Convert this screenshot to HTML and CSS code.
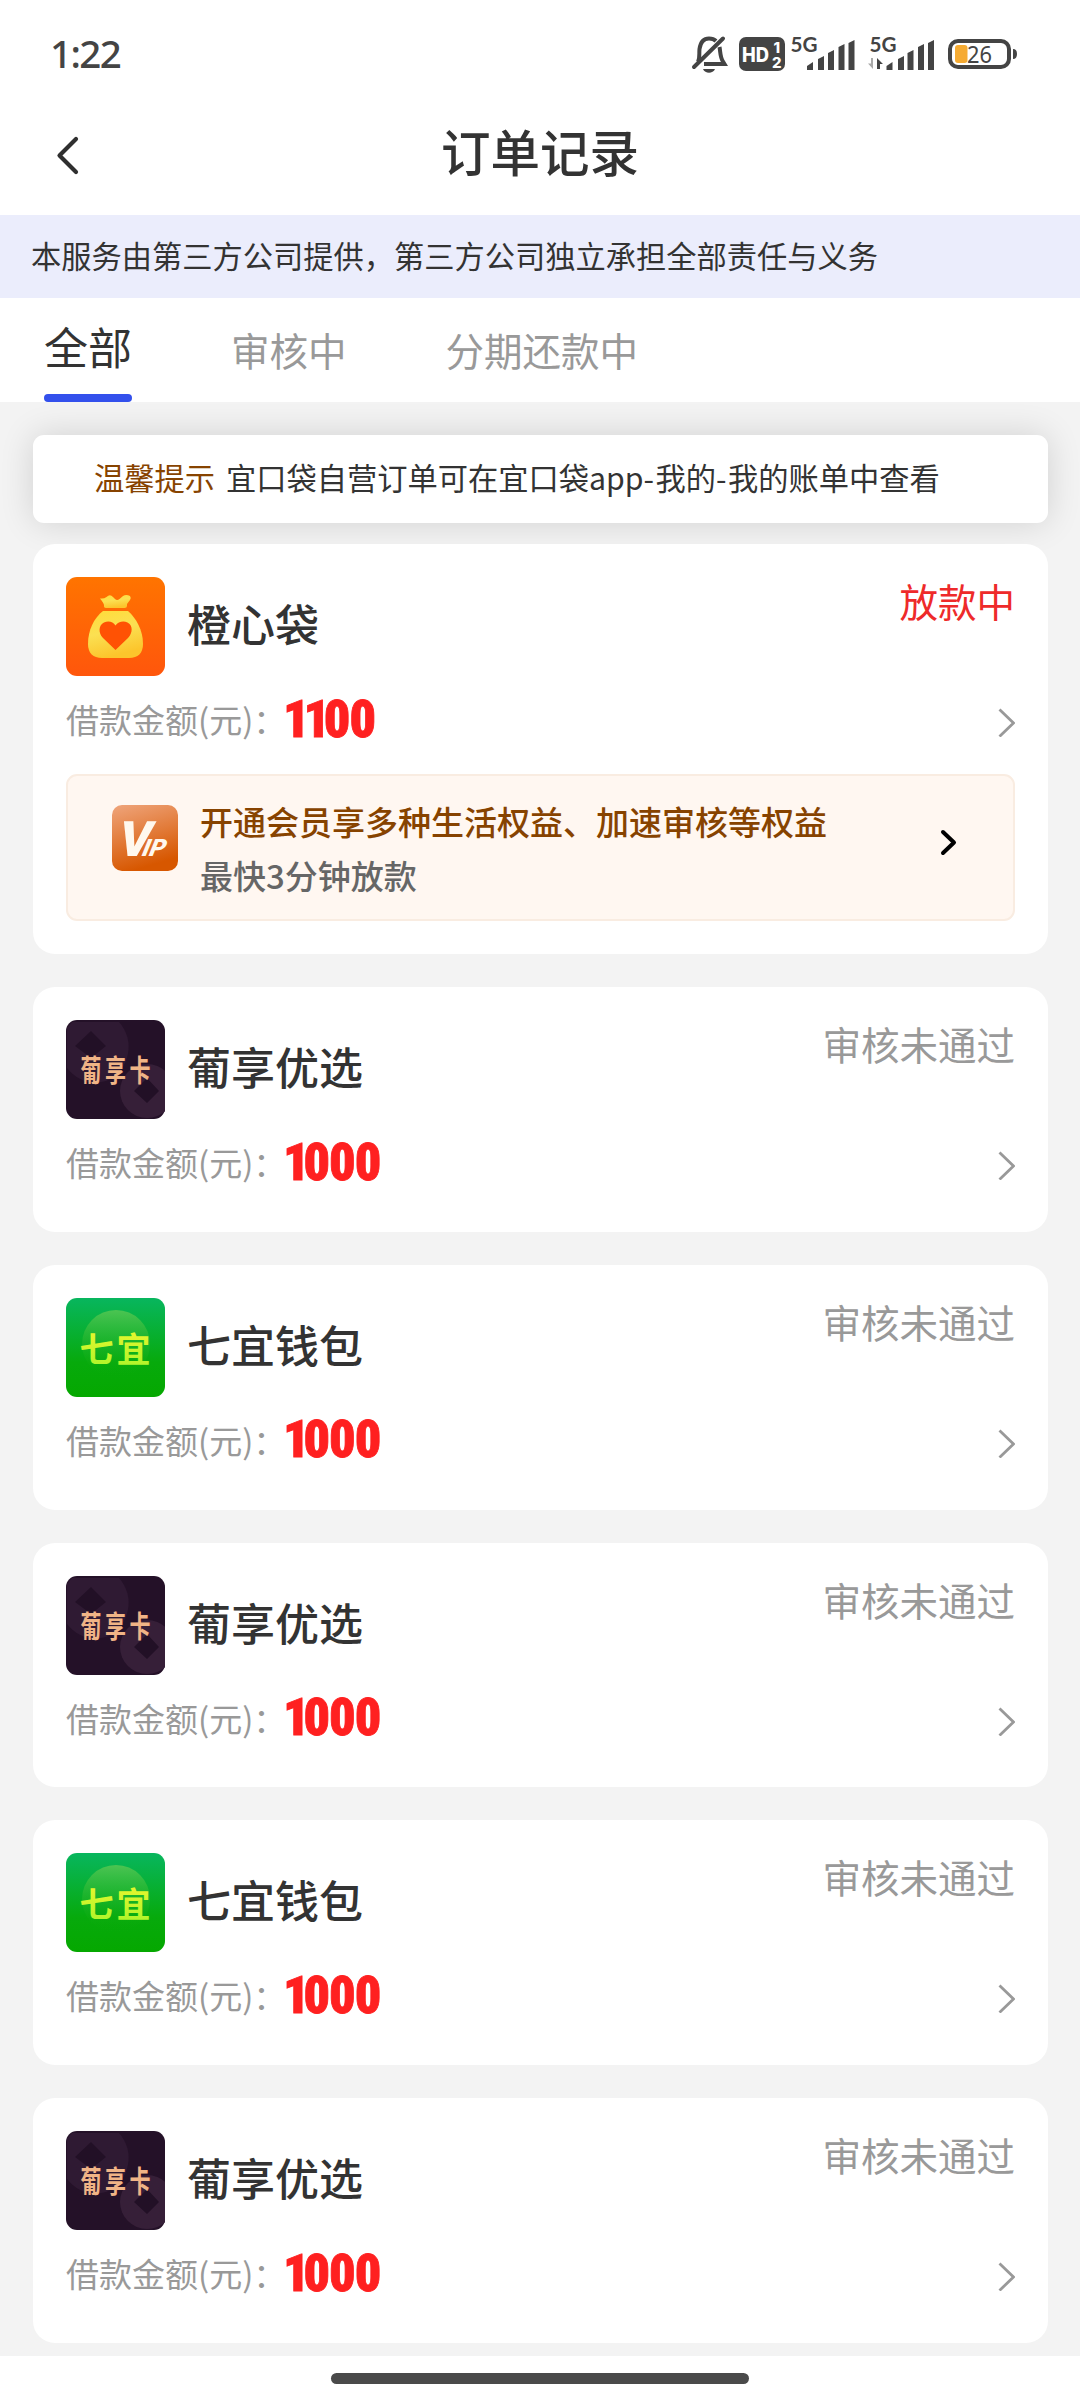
FILE: index.html
```html
<!DOCTYPE html>
<html lang="zh-CN">
<head>
<meta charset="utf-8">
<title>订单记录</title>
<link rel="stylesheet" href="styles.css">
</head>
<body>
<div class="page">
  <div class="statusbar">
    <span class="clock">1:22</span>
    <div class="sysicons">
      <svg class="bell" width="38" height="40" viewBox="0 0 38 40">
        <path d="M8 28C10 24 9 20 9.500 15C10.500 8 14 4.500 19 4.500C22 4.500 24 5 26 7M29.500 13C30.500 18 30 23 33 27.500L34.500 30H14" fill="none" stroke="#444" stroke-width="4"/>
        <path d="M33 4.500L4 33" stroke="#444" stroke-width="4" stroke-linecap="round"/>
        <path d="M13 35H25C23 40 15 40 13 35Z" fill="#444"/>
      </svg>
      <svg class="hd" width="46" height="40" viewBox="0 0 46 40">
        <rect y="3" width="46" height="34" rx="7" fill="#444"/>
        <text class="svg-hd" x="3" y="27.500" textLength="27" lengthAdjust="spacingAndGlyphs">HD</text>
        <text class="svg-hd-num" x="34.500" y="19">1</text>
        <text class="svg-hd-num" x="33" y="33.500">2</text>
      </svg>
      <svg class="signal-a" width="67" height="48" viewBox="0 -4 67 48">
        <text class="svg-5g" x="0.500" y="18" textLength="27" lengthAdjust="spacingAndGlyphs">5G</text>
        <path d="M17 36V32L23 28V36ZM28 36V25L34 22V36ZM38 36V19L44 16V36ZM48.500 36V13L54.500 10V36ZM58.500 36V9L64.500 6V36Z" fill="#444"/>
      </svg>
      <svg class="signal-b" width="68" height="48" viewBox="0 -4 68 48">
        <text class="svg-5g" x="2.500" y="18" textLength="27" lengthAdjust="spacingAndGlyphs">5G</text>
        <path d="M6 24V35L1 29.500H4V24Z" fill="#aaa"/>
        <path d="M10 35V24L16 30H13V35Z" fill="#444"/>
        <path d="M19.500 36V32L25.500 28V36ZM31 36V25L37 22V36ZM40.500 36V19L46.500 16V36ZM51 36V13L57 10V36ZM61 36V9L67 6V36Z" fill="#444"/>
      </svg>
      <svg class="battery" width="72" height="40" viewBox="0 0 72 40">
        <rect x="3" y="7" width="59" height="26" rx="8" fill="none" stroke="#444" stroke-width="4"/>
        <path d="M66 15Q70 15 70 20Q70 25 66 25Z" fill="#444"/>
        <rect x="8" y="11" width="12.500" height="18" rx="3" fill="#f6ab32"/>
        <text class="svg-batt" x="20" y="29" textLength="25" lengthAdjust="spacingAndGlyphs">26</text>
      </svg>
    </div>
  </div>

  <div class="navbar">
    <svg class="back" width="24" height="46" viewBox="0 0 24 46">
      <path d="M20 10L3.500 26.500L20 43" fill="none" stroke="#2f2f2f" stroke-width="4.200" stroke-linecap="round" stroke-linejoin="round"/>
    </svg>
    <h1 class="title">订单记录</h1>
  </div>

  <div class="disclaimer">本服务由第三方公司提供，第三方公司独立承担全部责任与义务</div>

  <div class="tabs">
    <div class="tab tab-active">全部</div>
    <div class="tab">审核中</div>
    <div class="tab">分期还款中</div>
  </div>

  <div class="content">
    <div class="tip"><span class="tip-label">温馨提示</span><span>宜口袋自营订单可在宜口袋app<i class="dash">-</i>我的<i class="dash">-</i>我的账单中查看</span></div>

    <div class="card card-vip">
      <div class="card-head">
        <svg class="logo" width="99" height="99" viewBox="0 0 99 99">
          <defs>
            <linearGradient id="orange" x1="0" y1="0" x2="0" y2="1"><stop offset="0" stop-color="#ff7400"/><stop offset="1" stop-color="#ff560c"/></linearGradient>
            <linearGradient id="gold" x1="0" y1="0" x2="0.300" y2="1"><stop offset="0" stop-color="#ffdc3a"/><stop offset="0.500" stop-color="#fbe052"/><stop offset="1" stop-color="#fcc52c"/></linearGradient>
            <linearGradient id="green" x1="0" y1="0" x2="0" y2="1"><stop offset="0" stop-color="#08b65e"/><stop offset="0.650" stop-color="#07aa0c"/><stop offset="1" stop-color="#05a800"/></linearGradient>
            <linearGradient id="glow" x1="0" y1="0" x2="0" y2="1"><stop offset="0" stop-color="#4cc452"/><stop offset="1" stop-color="#07aa06" stop-opacity="0"/></linearGradient>
            <linearGradient id="lime" x1="0" y1="0" x2="0" y2="1"><stop offset="0" stop-color="#f4f62e"/><stop offset="1" stop-color="#a5f52a"/></linearGradient>
            <linearGradient id="copper" x1="0" y1="0" x2="0.300" y2="1"><stop offset="0" stop-color="#efa57c"/><stop offset="1" stop-color="#d75700"/></linearGradient>
          </defs>
          <rect width="99" height="99" rx="11" fill="url(#orange)"/>
          <path d="M34 21.500Q38 22 40.500 20Q44 16.500 47 20L49 22Q51 24 53.500 22L57 19Q60 17 64 19Q65.500 21 64 23L61 27V29Q61 31 58.500 31H40Q37.500 31 38 28Q37.500 25.500 34 21.500Z" fill="url(#gold)"/>
          <path d="M37 34H62C70 41 77 53 77 67C77 76 72 81 63 81H36C27 81 22 76 22 67C22 53 28 41 37 34Z" fill="url(#gold)"/>
          <path d="M49.500 73L37 61C32 56 32.500 48 38 45.500C43 43.500 47 45 49.500 48.500C52 45 57 43.500 61.500 45.500C67 48 67 56 62 61Z" fill="#ff5204"/>
        </svg>
        <div class="name">橙心袋</div>
        <div class="state state-red">放款中</div>
      </div>
      <div class="amount-row">
        <span class="amount-label">借款金额(元)：</span><span class="amount"><span class="one">11</span>00</span>
        <svg class="more" width="17" height="36" viewBox="0 0 17 36"><path d="M1.500 8.500L15.500 22L1.500 35.500" fill="none" stroke="#999" stroke-width="2.800"/></svg>
      </div>
      <div class="vip">
        <svg class="vip-logo" width="66" height="66" viewBox="0 0 66 66">
          <rect width="66" height="66" rx="10" fill="url(#copper)"/>
          <text class="svg-v" transform="translate(4 51) skewX(-13)">V</text>
          <text class="svg-ip" transform="translate(28 51) skewX(-22)">IP</text>
        </svg>
        <div class="vip-text">
          <div class="vip-title">开通会员享多种生活权益、加速审核等权益</div>
          <div class="vip-sub">最快3分钟放款</div>
        </div>
        <svg class="vip-more" width="18" height="28" viewBox="0 0 18 28"><path d="M3 3L14 13.500L3 24" fill="none" stroke="#000" stroke-width="4" stroke-linecap="round" stroke-linejoin="round"/></svg>
      </div>
    </div>

    <div class="card">
      <div class="card-head">
        <svg class="logo" width="99" height="99" viewBox="0 0 99 99">
          <rect width="99" height="99" rx="11" fill="#241128"/>
          <path d="M6 2H53A37 37 0 0 1 40 61L30 63Q12 62 1 48V8Z" fill="#2f1a33"/>
          <circle cx="81" cy="71" r="27" fill="#361f38"/>
          <path d="M25 11L40 26L25 38L9 26ZM81 58L93 71L81 83L68 71Z" fill="#221026"/>
          <text class="svg-pu" transform="translate(14.500 60.500) scale(0.700 1)">葡享卡</text>
        </svg>
        <div class="name">葡享优选</div>
        <div class="state">审核未通过</div>
      </div>
      <div class="amount-row">
        <span class="amount-label">借款金额(元)：</span><span class="amount"><span class="one">1</span>000</span>
        <svg class="more" width="17" height="36" viewBox="0 0 17 36"><path d="M1.500 8.500L15.500 22L1.500 35.500" fill="none" stroke="#999" stroke-width="2.800"/></svg>
      </div>
    </div>

    <div class="card">
      <div class="card-head">
        <svg class="logo" width="99" height="99" viewBox="0 0 99 99">
          <rect width="99" height="99" rx="11" fill="url(#green)"/>
          <circle cx="50" cy="46" r="34" fill="url(#glow)"/>
          <text class="svg-qi" x="13.500" y="64">七宜</text>
        </svg>
        <div class="name">七宜钱包</div>
        <div class="state">审核未通过</div>
      </div>
      <div class="amount-row">
        <span class="amount-label">借款金额(元)：</span><span class="amount"><span class="one">1</span>000</span>
        <svg class="more" width="17" height="36" viewBox="0 0 17 36"><path d="M1.500 8.500L15.500 22L1.500 35.500" fill="none" stroke="#999" stroke-width="2.800"/></svg>
      </div>
    </div>

    <div class="card">
      <div class="card-head">
        <svg class="logo" width="99" height="99" viewBox="0 0 99 99">
          <rect width="99" height="99" rx="11" fill="#241128"/>
          <path d="M6 2H53A37 37 0 0 1 40 61L30 63Q12 62 1 48V8Z" fill="#2f1a33"/>
          <circle cx="81" cy="71" r="27" fill="#361f38"/>
          <path d="M25 11L40 26L25 38L9 26ZM81 58L93 71L81 83L68 71Z" fill="#221026"/>
          <text class="svg-pu" transform="translate(14.500 60.500) scale(0.700 1)">葡享卡</text>
        </svg>
        <div class="name">葡享优选</div>
        <div class="state">审核未通过</div>
      </div>
      <div class="amount-row">
        <span class="amount-label">借款金额(元)：</span><span class="amount"><span class="one">1</span>000</span>
        <svg class="more" width="17" height="36" viewBox="0 0 17 36"><path d="M1.500 8.500L15.500 22L1.500 35.500" fill="none" stroke="#999" stroke-width="2.800"/></svg>
      </div>
    </div>

    <div class="card">
      <div class="card-head">
        <svg class="logo" width="99" height="99" viewBox="0 0 99 99">
          <rect width="99" height="99" rx="11" fill="url(#green)"/>
          <circle cx="50" cy="46" r="34" fill="url(#glow)"/>
          <text class="svg-qi" x="13.500" y="64">七宜</text>
        </svg>
        <div class="name">七宜钱包</div>
        <div class="state">审核未通过</div>
      </div>
      <div class="amount-row">
        <span class="amount-label">借款金额(元)：</span><span class="amount"><span class="one">1</span>000</span>
        <svg class="more" width="17" height="36" viewBox="0 0 17 36"><path d="M1.500 8.500L15.500 22L1.500 35.500" fill="none" stroke="#999" stroke-width="2.800"/></svg>
      </div>
    </div>

    <div class="card">
      <div class="card-head">
        <svg class="logo" width="99" height="99" viewBox="0 0 99 99">
          <rect width="99" height="99" rx="11" fill="#241128"/>
          <path d="M6 2H53A37 37 0 0 1 40 61L30 63Q12 62 1 48V8Z" fill="#2f1a33"/>
          <circle cx="81" cy="71" r="27" fill="#361f38"/>
          <path d="M25 11L40 26L25 38L9 26ZM81 58L93 71L81 83L68 71Z" fill="#221026"/>
          <text class="svg-pu" transform="translate(14.500 60.500) scale(0.700 1)">葡享卡</text>
        </svg>
        <div class="name">葡享优选</div>
        <div class="state">审核未通过</div>
      </div>
      <div class="amount-row">
        <span class="amount-label">借款金额(元)：</span><span class="amount"><span class="one">1</span>000</span>
        <svg class="more" width="17" height="36" viewBox="0 0 17 36"><path d="M1.500 8.500L15.500 22L1.500 35.500" fill="none" stroke="#999" stroke-width="2.800"/></svg>
      </div>
    </div>
  </div>

  <div class="homebar"><div class="handle"></div></div>
</div>
</body>
</html>
```
FILE: styles.css
```css
* { box-sizing: border-box; }

body {
  margin: 0;
  background: #fff;
  color: #333;
  font-family: "Noto Sans CJK SC", sans-serif;
}

svg { display: block; flex: none; }

.page {
  width: 1080px;
  height: 2400px;
  overflow: hidden;
  display: flex;
  flex-direction: column;
}

.statusbar {
  height: 88px;
  padding: 20px 61px 0 50px;
  display: flex;
  align-items: center;
  justify-content: space-between;
}
.clock {
  padding-bottom: 2px;
  font: 500 38.5px/56px "Noto Sans", sans-serif;
  letter-spacing: -1.6px;
  color: #444;
}
.sysicons { display: flex; align-items: center; }
.hd { margin-left: 11px; }
.signal-a { margin-left: 5px; }
.signal-b { margin-left: 10px; }
.battery { margin-left: 12px; }
.svg-hd { font: 800 20px Inter, sans-serif; fill: #fff; }
.svg-hd-num { font: 800 15px Inter, sans-serif; fill: #fff; }
.svg-5g { font: 700 21px Lato, sans-serif; fill: #444; }
.svg-batt { font: 400 24px "Noto Sans", sans-serif; fill: #444; }

.navbar {
  height: 127px;
  padding: 0 56px;
  display: flex;
  align-items: center;
}
.title {
  flex: 1;
  margin: 0 24px 0 0;
  text-align: center;
  font-size: 49.5px;
  font-weight: 500;
  line-height: 72px;
  padding-bottom: 2px;
}

.disclaimer {
  height: 83px;
  padding-left: 31px;
  background: #ebedfc;
  font-size: 30.25px;
  line-height: 80px;
  white-space: nowrap;
}

.tabs {
  height: 104px;
  padding-left: 44px;
  display: flex;
  gap: 99px;
}
.tab {
  font-size: 38.5px;
  line-height: 102px;
  color: #999;
}
.tab-active {
  display: flex;
  flex-direction: column;
  justify-content: space-between;
  font-size: 44px;
  line-height: 96px;
  color: #333;
}
.tab-active::after {
  content: "";
  height: 8px;
  border-radius: 4px;
  background: #3350ec;
}

.content {
  height: 1954px;
  padding: 33px 32px 0 33px;
  background: #f3f3f3;
  overflow: hidden;
}

.tip {
  height: 88px;
  margin-bottom: 21px;
  padding-left: 61px;
  border-radius: 11px;
  background: #fff;
  box-shadow: 0 0 34px rgba(0, 0, 0, 0.14);
  display: flex;
  gap: 11px;
  font-size: 30.25px;
  line-height: 85px;
  white-space: nowrap;
}
.tip-label { color: #874300; }
.dash { font-style: normal; letter-spacing: 1.5px; }

.card {
  position: relative;
  margin-bottom: 33px;
  padding: 33px 33px 26.75px;
  border-radius: 22px;
  background: #fff;
}
.card-vip { padding-bottom: 33px; }
.card-head { display: flex; }
.name {
  flex: 1;
  margin-left: 22px;
  font-size: 44px;
  font-weight: 500;
  line-height: 93px;
  height: 99px;
}
.state {
  font-size: 38.5px;
  line-height: 46px;
  color: #999;
}
.state-red { color: #ee2a2a; }

.amount-row {
  height: 86px;
  display: flex;
  align-items: center;
}
.amount-label {
  width: 217px;
  font-size: 33px;
  color: #999;
  white-space: nowrap;
}
.amount {
  flex: 1;
  font-family: Roboto, sans-serif;
  font-size: 52px;
  font-weight: 900;
  font-stretch: 75%;
  letter-spacing: -0.9px;
  color: #ff2020;
  -webkit-text-stroke: 0.8px #ff2020;
}
.one { letter-spacing: -6.2px; }

.vip {
  height: 147px;
  margin-top: 12px;
  padding: 0 55px 0 44px;
  border: 2.5px solid #f9ece1;
  border-radius: 11px;
  background: #fff7f1;
  display: flex;
}
.vip-logo { margin-top: 29px; }
.vip-text {
  flex: 1;
  margin-left: 22px;
  padding-top: 18px;
  font-size: 33px;
  font-weight: 500;
  line-height: 54px;
}
.vip-title { color: #874300; }
.vip-sub { color: #666; }
.vip-more { margin-top: 53px; }
.svg-v { font: 900 49px Roboto, sans-serif; fill: #fff8ee; }
.svg-ip { font: 900 24px Roboto, sans-serif; fill: #fff8ee; }
.svg-pu { font: 700 30px "Noto Sans CJK SC", sans-serif; letter-spacing: 5px; fill: #f0b486; }
.svg-qi { font: 700 34px "Noto Sans CJK SC", sans-serif; letter-spacing: 3px; fill: url(#lime); }

.homebar {
  height: 44px;
  padding-top: 17px;
  background: #fff;
}
.handle {
  width: 418px;
  height: 11px;
  margin: 0 auto;
  border-radius: 6px;
  background: #4a4a4a;
}
```
